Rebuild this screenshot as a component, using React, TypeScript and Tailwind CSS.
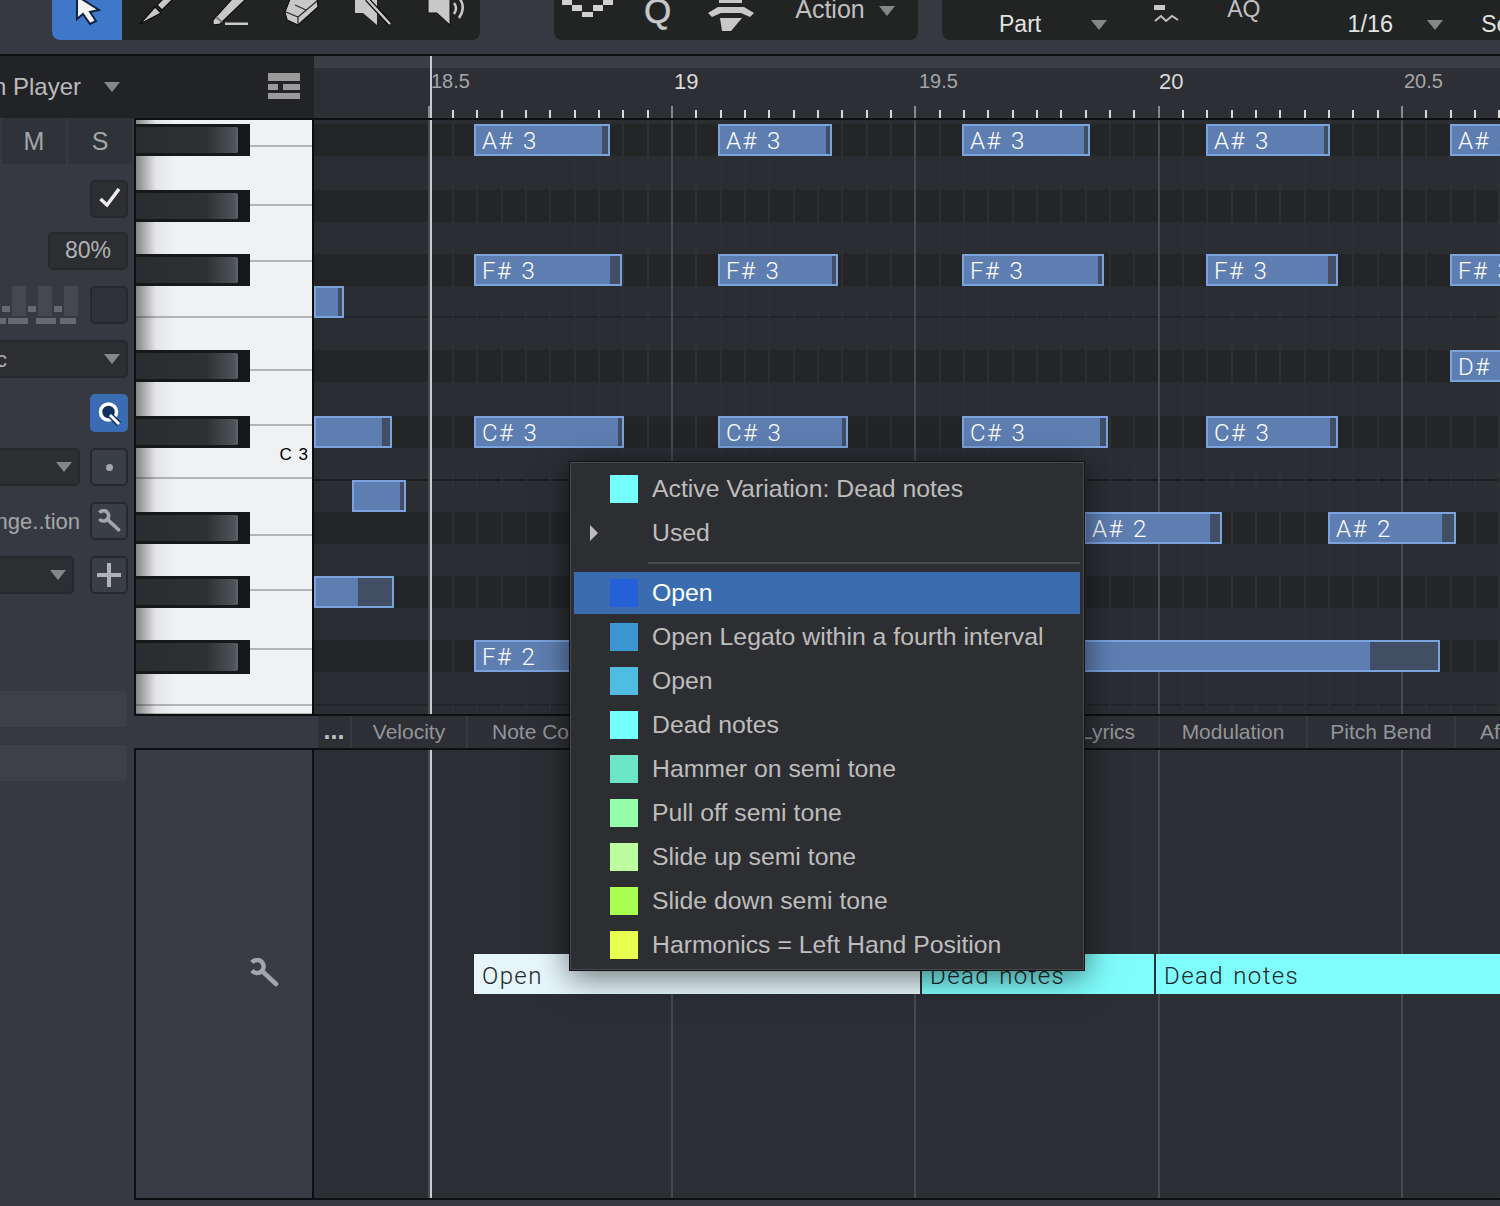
const NOTE_THIN = "font-[family-name:Roboto] font-light tracking-[1.4px] [word-spacing:2px]"

type Note = { x: number; y: number; w: number; tail: number; label?: string }

const notes: Note[] = [
  { x: 474, y: 124, w: 136, tail: 6, label: 'A# 3' },
  { x: 718, y: 124, w: 114, tail: 4, label: 'A# 3' },
  { x: 962, y: 124, w: 128, tail: 4, label: 'A# 3' },
  { x: 1206, y: 124, w: 124, tail: 4, label: 'A# 3' },
  { x: 1450, y: 124, w: 100, tail: 4, label: 'A# 3' },
  { x: 474, y: 254, w: 148, tail: 10, label: 'F# 3' },
  { x: 718, y: 254, w: 120, tail: 4, label: 'F# 3' },
  { x: 962, y: 254, w: 142, tail: 4, label: 'F# 3' },
  { x: 1206, y: 254, w: 132, tail: 8, label: 'F# 3' },
  { x: 1450, y: 254, w: 100, tail: 4, label: 'F# 3' },
  { x: 314, y: 286, w: 30, tail: 4 },
  { x: 1450, y: 350, w: 100, tail: 4, label: 'D# 3' },
  { x: 314, y: 416, w: 78, tail: 8 },
  { x: 474, y: 416, w: 150, tail: 4, label: 'C# 3' },
  { x: 718, y: 416, w: 130, tail: 4, label: 'C# 3' },
  { x: 962, y: 416, w: 146, tail: 6, label: 'C# 3' },
  { x: 1206, y: 416, w: 132, tail: 6, label: 'C# 3' },
  { x: 352, y: 480, w: 54, tail: 4 },
  { x: 1084, y: 512, w: 138, tail: 10, label: 'A# 2' },
  { x: 1328, y: 512, w: 128, tail: 12, label: 'A# 2' },
  { x: 314, y: 576, w: 80, tail: 34 },
  { x: 474, y: 640, w: 966, tail: 68, label: 'F# 2' },
]

const lanes = [
  { h: 4, c: 'bg-[#2a2d32]' },
  { h: 32, c: 'bg-[#232527]' },
  { h: 34, c: 'bg-[#2a2d32]' },
  { h: 32, c: 'bg-[#232527]' },
  { h: 32, c: 'bg-[#2a2d32]' },
  { h: 32, c: 'bg-[#232527]' },
  { h: 32, c: 'bg-[#2a2d32] border-b-2 border-[#232427]' },
  { h: 32, c: 'bg-[#2a2d32]' },
  { h: 32, c: 'bg-[#232527]' },
  { h: 34, c: 'bg-[#2a2d32]' },
  { h: 32, c: 'bg-[#232527]' },
  { h: 33, c: 'bg-[#2a2d32] border-b-2 border-[#1b1c1e]' },
  { h: 31, c: 'bg-[#2a2d32]' },
  { h: 32, c: 'bg-[#232527]' },
  { h: 32, c: 'bg-[#2a2d32]' },
  { h: 32, c: 'bg-[#232527]' },
  { h: 32, c: 'bg-[#2a2d32]' },
  { h: 32, c: 'bg-[#232527]' },
  { h: 34, c: 'bg-[#2a2d32] border-b-2 border-[#232427]' },
  { h: 8, c: 'bg-[#2a2d32]' },
]

const whiteKeys = [27, 59, 56, 56, 53, 55, 53, 57, 55, 59, 56, 9]
const blackKeys = [
  { y: 4, h: 32 },
  { y: 70, h: 32 },
  { y: 134, h: 32 },
  { y: 230, h: 32 },
  { y: 296, h: 32 },
  { y: 392, h: 32 },
  { y: 456, h: 32 },
  { y: 520, h: 34 },
]

const menuItems = [
  { label: 'Open', color: 'bg-[#2560d8]', active: true },
  { label: 'Open Legato within a fourth interval', color: 'bg-[#3c96d4]' },
  { label: 'Open', color: 'bg-[#50bce4]' },
  { label: 'Dead notes', color: 'bg-[#76ffff]' },
  { label: 'Hammer on semi tone', color: 'bg-[#6be4c8]' },
  { label: 'Pull off semi tone', color: 'bg-[#96fdab]' },
  { label: 'Slide up semi tone', color: 'bg-[#bcfda0]' },
  { label: 'Slide down semi tone', color: 'bg-[#aaff50]' },
  { label: 'Harmonics = Left Hand Position', color: 'bg-[#e8ff50]' },
]

const ticks = Array.from({ length: 51 }, (_, i) => i - 10)
const tickX = (i: number) => 671 + i * 24.33 - 314

function Tri({ className = '' }: { className?: string }) {
  return (
    <svg width="16" height="10" viewBox="0 0 16 10" className={`shrink-0 ${className}`}>
      <path d="M0 0H16L8 10Z" fill="#85878a" />
    </svg>
  )
}

function Wrench({ size = 30 }: { size?: number }) {
  return (
    <svg width={size} height={size} viewBox="0 0 30 30" fill="none" stroke="#a3a5a8" strokeWidth="4.5" strokeLinecap="round">
      <path d="M3 4.5A6.5 6.5 0 1 1 3 12.5" strokeLinecap="butt" />
      <path d="M13 13L27 26" />
    </svg>
  )
}

function GridLines() {
  return (
    <>
      {ticks.map((i) => (
        <div
          key={i}
          className={`absolute top-0 bottom-0 w-[2px] ${i % 10 === 0 ? 'bg-[#47494e]' : 'bg-[#2e2f33]'}`}
          style={{ left: tickX(i) }}
        />
      ))}
      <div className="absolute top-0 bottom-0 left-[116px] w-[2px] bg-[#c9cacc]" />
    </>
  )
}

function SideButton({ children, className = '' }: { children?: React.ReactNode; className?: string }) {
  return (
    <div className={`w-[38px] h-[38px] rounded-[5px] border-2 border-[#26282b] flex items-center justify-center shrink-0 ${className}`}>
      {children}
    </div>
  )
}

function Sidebar() {
  return (
    <div className="w-[134px] shrink-0 flex flex-col overflow-hidden">
      <div className="h-[46px] flex gap-[2px] pl-[2px] bg-[#363a40]">
        <div className="w-[64px] bg-[#2f3338] flex items-center justify-center pt-[2px] text-[25px] text-[#a3a5a8]">M</div>
        <div className="w-[64px] bg-[#2f3338] flex items-center justify-center pt-[2px] text-[25px] text-[#a3a5a8]">S</div>
      </div>

      <div className="mt-[16px] h-[38px] flex justify-end pr-[6px]">
        <SideButton className="bg-[#2c2e31]">
          <svg width="22" height="20" viewBox="0 0 22 20" fill="none" stroke="#f0f0f0" strokeWidth="3.5" className="-mt-[3px] ml-[2px]">
            <path d="M1.5 11L8 17L20 1" />
          </svg>
        </SideButton>
      </div>

      <div className="mt-[14px] h-[38px] flex justify-end pr-[6px]">
        <div className="w-[80px] rounded-[5px] border-2 border-[#26282b] bg-[#2c2e31] flex items-center justify-center text-[23px] text-[#b0b2b5] pb-[1px]">
          80%
        </div>
      </div>

      <div className="mt-[16px] h-[38px] flex justify-end items-end pr-[6px] gap-[12px]">
        <svg width="78" height="38" viewBox="0 0 78 38" className="shrink-0">
          <path d="M12 0H26V30H12ZM38 0H52V30H38ZM64 0H78V30H64Z" fill="#45484d" />
          <path d="M2 20H10V26H2ZM28 20H36V26H28ZM54 20H62V26H54ZM0 32H6V38H0ZM8 32H28V38H8ZM36 32H56V38H36ZM60 32H76V38H60Z" fill="#66696d" />
        </svg>
        <SideButton className="bg-[#2f3236]" />
      </div>

      <div className="mt-[16px] h-[38px] pr-[6px]">
        <div className="h-full rounded-r-[5px] border-y-2 border-r-2 border-[#26282b] bg-[#2c2e31] flex items-center justify-between pr-[6px]">
          <span className="text-[22px] text-[#b0b2b5] -ml-[4px]">c</span>
          <Tri />
        </div>
      </div>

      <div className="mt-[16px] h-[38px] flex justify-end pr-[6px]">
        <div className="w-[38px] h-[38px] rounded-[5px] bg-[#3a6cb4] flex items-center justify-center">
          <svg width="26" height="28" viewBox="0 0 26 28" fill="none">
            <circle cx="12.5" cy="13" r="8" fill="#10305e" stroke="#ffffff" strokeWidth="3.5" />
            <path d="M14 16L23 25" stroke="#10305e" strokeWidth="6" />
            <path d="M14 16L23 25" stroke="#ffffff" strokeWidth="3" />
          </svg>
        </div>
      </div>

      <div className="mt-[16px] h-[38px] flex pr-[6px] gap-[10px]">
        <div className="flex-1 rounded-r-[5px] border-y-2 border-r-2 border-[#26282b] bg-[#2c2e31] flex items-center justify-end pr-[6px]">
          <Tri />
        </div>
        <SideButton className="bg-[#3a3e45]">
          <div className="w-[7px] h-[7px] rounded-full bg-[#a3a5a8]" />
        </SideButton>
      </div>

      <div className="mt-[16px] h-[38px] flex justify-end items-center pr-[6px] gap-[10px]">
        <span className="text-[22px] text-[#a3a5a8] whitespace-nowrap">nge..tion</span>
        <SideButton className="bg-[#3a3e45]">
          <Wrench size={24} />
        </SideButton>
      </div>

      <div className="mt-[16px] h-[38px] flex pr-[6px] gap-[16px]">
        <div className="flex-1 rounded-r-[5px] border-y-2 border-r-2 border-[#26282b] bg-[#2c2e31] flex items-center justify-end pr-[6px]">
          <Tri />
        </div>
        <SideButton className="bg-[#3a3e45]">
          <svg width="24" height="24" viewBox="0 0 24 24">
            <path d="M10 0H14V10H24V14H14V24H10V14H0V10H10Z" fill="#b0b2b5" />
          </svg>
        </SideButton>
      </div>

      <div className="mt-[97px] h-[36px] w-[127px] rounded-r-[4px] bg-[#3d4045]" />
      <div className="mt-[18px] h-[36px] w-[127px] rounded-r-[4px] bg-[#3d4045]" />
    </div>
  )
}

function Keyboard() {
  return (
    <div className="relative w-[176px] shrink-0 bg-[#f0f1f3] overflow-hidden">
      <div className="flex flex-col">
        {whiteKeys.map((h, i) => (
          <div key={i} className="border-b-2 border-[#b4b5b7]" style={{ height: h }} />
        ))}
      </div>
      <div className="absolute top-0 bottom-0 left-0 w-[40px] bg-gradient-to-r from-black/45 via-black/5 via-50% to-transparent" />
      {blackKeys.map((k) => (
        <div key={k.y} className="absolute left-0 w-[114px] bg-[#16181a] py-[3px] pr-[12px]" style={{ top: k.y, height: k.h }}>
          <div className="h-full bg-gradient-to-r from-[#2a2c2f] via-[#2e3134] via-70% to-[#50565b] border-r-2 border-[#5c6267] rounded-r-[2px]" />
        </div>
      ))}
      <span className="absolute right-[3px] top-[325px] text-[17px] leading-[20px] tracking-[1px] text-black">C 3</span>
    </div>
  )
}

function NoteBar({ note }: { note: Note }) {
  return (
    <div
      className={`absolute h-[32px] border-2 border-[#7aa2dc] bg-[#5e7eb2] overflow-hidden text-white text-[24px] leading-[30px] pl-[6px] whitespace-nowrap ${NOTE_THIN}`}
      style={{ left: note.x - 314, top: note.y - 120, width: note.w }}
    >
      {note.label}
      <div className="absolute top-0 bottom-0 right-0 bg-[#414e64]" style={{ width: note.tail }} />
    </div>
  )
}

function Tab({ label, w, clip }: { label: string; w: number; clip?: boolean }) {
  return (
    <div
      className={`h-full shrink-0 mr-[2px] bg-[#2d2f34] flex items-center text-[21px] text-[#93959a] whitespace-nowrap overflow-hidden ${clip ? 'pl-[24px]' : 'justify-center'}`}
      style={{ width: w }}
    >
      {label}
    </div>
  )
}

function Toolbar() {
  return (
    <div className="h-[56px] shrink-0 border-b-2 border-[#0d0e10] flex items-start">
      <div className="ml-[52px] w-[428px] h-[40px] rounded-b-[8px] bg-[#222423] flex overflow-hidden">
        <div className="w-[70px] bg-[#3f78c9]">
          <svg width="70" height="40" viewBox="0 0 70 40">
            <path d="M25 -4V19L31 14L38 24L44 21L38 12L47 10Z" fill="#f4f4f4" stroke="#12233d" strokeWidth="2" />
          </svg>
        </div>
        <svg width="72" height="40" viewBox="0 0 72 40">
          <path d="M18 24L33 7L39 13Z" fill="#c8c8c8" stroke="#0e0e0e" strokeWidth="1.2" />
          <path d="M35 5L41 -1H51L40 10Z" fill="#c8c8c8" stroke="#0e0e0e" strokeWidth="1.2" />
        </svg>
        <svg width="74" height="40" viewBox="0 0 74 40">
          <path d="M19 25V20L38 -1H52L26 24Z" fill="#c8c8c8" stroke="#0e0e0e" strokeWidth="1.2" />
          <path d="M22 17L28 22" stroke="#777" strokeWidth="2" />
          <path d="M31 22.5H54V25H31Z" fill="#c8c8c8" />
        </svg>
        <svg width="68" height="40" viewBox="0 0 68 40">
          <path d="M17 12L22 -1H49L50 7L30 25L19 20Z" fill="#c8c8c8" stroke="#0e0e0e" strokeWidth="1.2" />
          <path d="M18 12L30 17L49 1M30 17V25M27 5L38 10" fill="none" stroke="#2a2a2a" strokeWidth="1.2" />
        </svg>
        <svg width="72" height="40" viewBox="0 0 72 40">
          <path d="M19 -1V13H27L41 25V-1Z" fill="#c8c8c8" />
          <path d="M31 -1L54 24" stroke="#0e0e0e" strokeWidth="5" />
          <path d="M31 -1L54 24" stroke="#c8c8c8" strokeWidth="2.5" />
        </svg>
        <svg width="72" height="40" viewBox="0 0 72 40">
          <path d="M20 -1V13H29L42 25V-1Z" fill="#c8c8c8" stroke="#0e0e0e" strokeWidth="1" />
          <path d="M46 3Q50 8 46 14M52 -1Q58 8 51 18" fill="none" stroke="#c8c8c8" strokeWidth="2.5" />
        </svg>
      </div>

      <div className="ml-[74px] w-[364px] h-[40px] rounded-b-[8px] bg-[#222423] flex items-start">
        <svg width="56" height="20" viewBox="0 0 56 20" className="ml-[8px] shrink-0">
          <path d="M0 0H10V5H0ZM10 5H20V11H10ZM20 12H31V17H20ZM31 5H41V11H31ZM41 0H51V5H41Z" fill="#d0d0d0" />
        </svg>
        <span className="ml-[26px] text-[35px] leading-[22px] text-[#c8c8c8] [-webkit-text-stroke:0.5px_#c8c8c8]">Q</span>
        <svg width="48" height="34" viewBox="0 0 48 34" className="ml-[36px] shrink-0">
          <path d="M12 0H35V3H12Z" fill="#c8c8c8" />
          <path d="M1 13L11 7H37L47 13L43 17L34 13H14L5 17Z" fill="#c8c8c8" />
          <path d="M13 18H35L24 31H15Z" fill="#c8c8c8" />
        </svg>
        <span className="ml-[40px] text-[25px] leading-[18px] text-[#c0c0c0]">Action</span>
        <Tri className="ml-[14px] mt-[6px]" />
      </div>

      <div className="ml-[24px] flex-1 h-[40px] rounded-bl-[8px] bg-[#222423] flex overflow-hidden">
        <span className="ml-[57px] mt-[11px] text-[23px] leading-[26px] text-[#e2e2e2]">Part</span>
        <Tri className="ml-[50px] mt-[20px]" />
        <svg width="26" height="24" viewBox="0 0 26 24" className="ml-[47px] mt-[2px] shrink-0">
          <path d="M0 3H11V8H0Z" fill="#c8c8c8" />
          <path d="M1 19L7 14L12 19L18 14L24 18" fill="none" stroke="#c0c0c0" strokeWidth="2" />
        </svg>
        <span className="ml-[47px] text-[23px] leading-[18px] text-[#c0c0c0]">AQ</span>
        <span className="ml-[87px] mt-[11px] text-[23.5px] leading-[26px] text-[#e2e2e2]">1/16</span>
        <Tri className="ml-[34px] mt-[20px]" />
        <span className="ml-[38px] mt-[11px] text-[23px] leading-[26px] text-[#e2e2e2]">Se</span>
      </div>
    </div>
  )
}

function Ruler() {
  const labels = [
    { t: '18.5', x: 431, c: 'top-[13px] text-[#a3a5a8] text-[20px]' },
    { t: '19', x: 674, c: 'top-[14px] text-[#dcdcdc] text-[22px]' },
    { t: '19.5', x: 919, c: 'top-[13px] text-[#a3a5a8] text-[20px]' },
    { t: '20', x: 1159, c: 'top-[14px] text-[#dcdcdc] text-[22px]' },
    { t: '20.5', x: 1404, c: 'top-[13px] text-[#a3a5a8] text-[20px]' },
  ]
  return (
    <div className="relative flex-1 bg-[#2d2f34] overflow-hidden">
      <div className="h-[12px] bg-[#3b3f44]" />
      {labels.map((l) => (
        <span key={l.t} className={`absolute leading-[24px] ${l.c}`} style={{ left: l.x - 314 }}>
          {l.t}
        </span>
      ))}
      {ticks.map((i) => (
        <div
          key={i}
          className={`absolute bottom-0 w-[2px] ${i % 10 === 0 ? 'h-[12px] bg-[#87898d]' : 'h-[8px] bg-[#d8d8d8]'}`}
          style={{ left: tickX(i) }}
        />
      ))}
      <div className="absolute top-0 bottom-0 left-[116px] w-[2px] bg-[#c9cacc]" />
    </div>
  )
}

function ContextMenu() {
  return (
    <div className="absolute left-[569px] top-[461px] w-[516px] h-[510px] bg-[#2d2e31] border border-[#111214] outline outline-1 -outline-offset-2 outline-[#47494d] shadow-[0_6px_30px_rgba(0,0,0,0.55)] pt-[5px] z-20">
      <div className="h-[44px] flex items-center pl-[40px] text-[24.8px] text-[#bdbdbd]">
        <div className="w-[28px] h-[28px] bg-[#76ffff] mr-[14px]" />
        Active Variation: Dead notes
      </div>
      <div className="h-[44px] flex items-center pl-[20px] text-[24.8px] text-[#bdbdbd]">
        <svg width="8" height="16" viewBox="0 0 8 16" className="mr-[54px]">
          <path d="M0 0L8 8L0 16Z" fill="#bdbdbd" />
        </svg>
        Used
      </div>
      <div className="ml-[78px] mr-[4px] mt-[7px] mb-[8px] h-[2px] bg-[#4a4b50]" />
      {menuItems.map((m, i) => (
        <div
          key={i}
          className={`flex items-center ml-[4px] mr-[4px] pl-[36px] text-[24.8px] ${m.active ? 'h-[42px] mb-[1px] bg-[#3b6cb0] text-white' : 'h-[44px] text-[#bdbdbd]'}`}
        >
          <div className={`w-[28px] h-[28px] mr-[14px] ${m.color}`} />
          {m.label}
        </div>
      ))}
    </div>
  )
}

export default function App() {
  return (
    <div className="relative w-[1500px] h-[1206px] overflow-hidden bg-[#363a40] font-[family-name:Liberation_Sans,sans-serif] flex flex-col">
      <Toolbar />

      <div className="h-[62px] shrink-0 flex">
        <div className="w-[314px] bg-[#222326] flex items-center justify-between pr-[14px] overflow-hidden">
          <div className="flex items-center">
            <span className="-ml-[7px] text-[24px] text-[#b9babc] whitespace-nowrap">n Player</span>
            <Tri className="ml-[23px]" />
          </div>
          <svg width="32" height="26" viewBox="0 0 32 26" className="-mt-[2px]">
            <path d="M0 0H32V8H0ZM0 11H10V17H0ZM15 11H32V17H15ZM0 20H32V26H0Z" fill="#9a9a9a" />
          </svg>
        </div>
        <Ruler />
      </div>

      <div className="flex-1 flex min-h-0">
        <Sidebar />

        <div className="flex-1 flex flex-col min-w-0">
          <div className="h-[2px] bg-[#0d0e10] shrink-0" />

          <div className="h-[596px] shrink-0 flex border-b-2 border-[#0d0e10]">
            <div className="w-[2px] bg-[#0d0e10] shrink-0" />
            <Keyboard />
            <div className="w-[2px] bg-[#0d0e10] shrink-0" />
            <div className="relative flex-1 overflow-hidden">
              <div className="flex flex-col">
                {lanes.map((l, i) => (
                  <div key={i} className={l.c} style={{ height: l.h }} />
                ))}
              </div>
              <GridLines />
              {notes.map((n) => (
                <NoteBar key={`${n.x}-${n.y}`} note={n} />
              ))}
            </div>
          </div>

          <div className="h-[34px] shrink-0 flex border-b-2 border-[#0d0e10] overflow-hidden">
            <div className="w-[184px] shrink-0" />
            <div className="w-[32px] shrink-0 mr-[2px] bg-[#2d2f34] flex items-center justify-center text-[25px] font-bold text-[#c0c0c0] pb-[2px]">
              ...
            </div>
            <Tab label="Velocity" w={114} />
            <Tab label="Note Controller" w={130} clip />
            <div className="w-[484px] shrink-0 bg-[#2d2f34]" />
            <div className="w-[74px] shrink-0 mr-[2px] bg-[#2d2f34] flex items-center text-[21px] text-[#93959a] overflow-hidden whitespace-nowrap">
              <span className="-ml-[3px]">Lyrics</span>
            </div>
            <Tab label="Modulation" w={146} />
            <Tab label="Pitch Bend" w={146} />
            <Tab label="Aftertouch" w={100} clip />
          </div>

          <div className="h-[450px] shrink-0 flex border-b-2 border-[#0d0e10]">
            <div className="w-[2px] bg-[#0d0e10] shrink-0" />
            <div className="w-[176px] shrink-0 bg-[#383b41] flex justify-end pt-[208px] pr-[33px]">
              <Wrench />
            </div>
            <div className="w-[2px] bg-[#0d0e10] shrink-0" />
            <div className="relative flex-1 overflow-hidden bg-[#2b2e32]">
              <GridLines />
              <div className={`absolute left-[160px] right-0 top-[204px] h-[40px] flex text-[24px] text-[#20282a] ${NOTE_THIN}`}>
                <div className="w-[446px] bg-[#e6f6fa] pl-[8px] leading-[44px]">Open</div>
                <div className="ml-[2px] w-[232px] bg-[#7ffcfc] pl-[8px] leading-[44px]">Dead notes</div>
                <div className="ml-[2px] flex-1 bg-[#7ffcfc] pl-[8px] leading-[44px]">Dead notes</div>
              </div>
            </div>
          </div>
        </div>
      </div>

      <ContextMenu />
    </div>
  )
}
